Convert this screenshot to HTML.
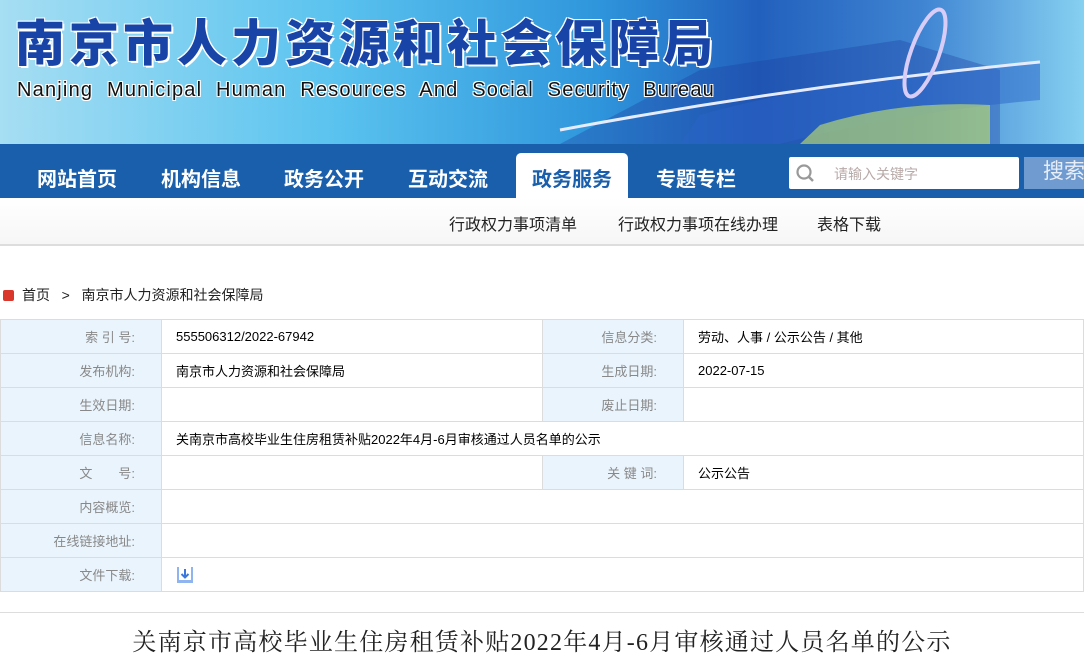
<!DOCTYPE html>
<html><head><meta charset="utf-8"><style>
*{margin:0;padding:0;box-sizing:border-box}
body{width:1084px;height:660px;overflow:hidden;background:#fff;font-family:"Liberation Sans","Noto Sans CJK SC",sans-serif}
.banner{position:absolute;left:0;top:0;width:1084px;height:144px;background:linear-gradient(90deg,#a6def3 0%,#5cc4ef 30%,#2f96dc 55%,#2260bd 70%,#3f84d2 85%,#86d0f1 100%);overflow:hidden}
.t1{position:absolute;left:15px;top:10px;font-family:"Noto Sans CJK SC",sans-serif;font-weight:900;font-size:50px;line-height:60px;color:#1844a8;letter-spacing:4px;text-shadow:2px 2px 0 #fff,-1px -1px 0 #fff,1px -1px 0 #fff,-1px 1px 0 #fff;white-space:nowrap}
.t2{position:absolute;left:17px;top:79px;font-size:20px;color:#111;letter-spacing:1.2px;word-spacing:7px;text-shadow:1px 1px 0 #fff,-1px -1px 0 #fff,1px -1px 0 #fff,-1px 1px 0 #fff;white-space:nowrap}
.nav{position:absolute;top:144px;left:0;width:1084px;height:54px;background:#1a5fab}
.nav a{position:absolute;top:19px;color:#fff;font-weight:bold;font-size:20px;text-decoration:none;white-space:nowrap}
.act{position:absolute;left:516px;top:9px;width:112px;height:45px;background:#fff;border-radius:5px 5px 0 0}
.search{position:absolute;left:789px;top:13px;width:230px;height:32px;background:#fff;border-radius:2px}
.search span{position:absolute;left:45px;top:7px;font-size:14px;color:#b8aaa8}
.btn{position:absolute;left:1024px;top:13px;width:60px;height:32px;background:#6f9bd0;color:#e8eef8;font-size:21px;line-height:30px;padding-left:19px;white-space:nowrap;overflow:hidden}
.sub{position:absolute;top:198px;left:0;width:1084px;height:48px;background:linear-gradient(#fff,#f6f6f6);border-bottom:2px solid #ddd}
.sub span{position:absolute;top:13px;font-size:16px;color:#222;white-space:nowrap}
.bc{position:absolute;top:285px;left:0;font-size:14px;color:#222}
table{position:absolute;top:319px;left:0;width:1084px;border-collapse:collapse;font-size:13px}
td{height:34px;border:1px solid #dcdcdc;padding:0 14px}
td.l{background:#eaf4fc;color:#888;text-align:right;padding-right:26px}
.h{position:absolute;top:622px;left:0;width:1084px;text-align:center;font-family:"Liberation Serif","Noto Serif CJK SC",serif;font-size:24px;letter-spacing:1.2px;color:#222;white-space:nowrap}
</style></head><body>
<div class="banner">
<svg width="1084" height="144" style="position:absolute;left:0;top:0">
<path d="M560 144 L700 70 L900 40 L1000 70 L1000 144Z" fill="#1c3fa0" opacity=".35"/>
<path d="M700 115 Q820 80 1040 62 L1040 100 Q900 112 780 144 L680 144Z" fill="#2a63c8" opacity=".5"/>
<path d="M820 125 Q900 100 990 105 L990 144 L800 144Z" fill="#c7e46a" opacity=".6"/>
<path d="M560 130 Q800 85 1040 62" stroke="#e6ecff" stroke-width="3" fill="none"/>
<ellipse cx="925" cy="53" rx="14" ry="46" transform="rotate(20 925 53)" stroke="#d9cdf7" stroke-width="4" fill="none"/>
</svg>
<div class="t1">南京市人力资源和社会保障局</div>
<div class="t2">Nanjing Municipal Human Resources And Social Security Bureau</div>
</div>
<div class="nav">
<div class="act"></div>
<a style="left:37px">网站首页</a><a style="left:161px">机构信息</a><a style="left:284px">政务公开</a><a style="left:408px">互动交流</a><a style="left:532px;color:#1a5fab">政务服务</a><a style="left:656px">专题专栏</a>
<div class="search"><svg width="24" height="24" style="position:absolute;left:5px;top:5px"><circle cx="10" cy="10" r="6.5" stroke="#999" stroke-width="2.2" fill="none"/><path d="M15 15 L19 19" stroke="#999" stroke-width="2.5"/></svg><span>请输入关键字</span></div>
<div class="btn">搜索</div>
</div>
<div class="sub"><span style="left:449px">行政权力事项清单</span><span style="left:618px">行政权力事项在线办理</span><span style="left:817px">表格下载</span></div>
<div class="bc"><span style="display:inline-block;width:11px;height:11px;background:#d9362c;border-radius:2px;margin:0 8px 0 3px;vertical-align:-1px"></span>首页&nbsp;&nbsp;&nbsp;&gt;&nbsp;&nbsp;&nbsp;南京市人力资源和社会保障局</div>
<table>
<colgroup><col style="width:161px"><col style="width:381px"><col style="width:141px"><col></colgroup>
<tr><td class="l">索 引 号:</td><td>555506312/2022-67942</td><td class="l">信息分类:</td><td>劳动、人事 / 公示公告 / 其他</td></tr>
<tr><td class="l">发布机构:</td><td>南京市人力资源和社会保障局</td><td class="l">生成日期:</td><td>2022-07-15</td></tr>
<tr><td class="l">生效日期:</td><td></td><td class="l">废止日期:</td><td></td></tr>
<tr><td class="l">信息名称:</td><td colspan="3">关南京市高校毕业生住房租赁补贴2022年4月-6月审核通过人员名单的公示</td></tr>
<tr><td class="l">文　　号:</td><td></td><td class="l">关 键 词:</td><td>公示公告</td></tr>
<tr><td class="l">内容概览:</td><td colspan="3"></td></tr>
<tr><td class="l">在线链接地址:</td><td colspan="3"></td></tr>
<tr><td class="l">文件下载:</td><td colspan="3"><svg width="18" height="18" style="vertical-align:middle"><rect x="1" y="1" width="16" height="16" fill="#8fb4ef"/><rect x="3" y="1" width="12" height="13" fill="#fff"/><path d="M9 3 V11 M5.5 8 L9 11.5 L12.5 8" stroke="#3a78e0" stroke-width="2" fill="none"/></svg></td></tr>
</table>
<div style="position:absolute;top:612px;left:0;width:1084px;border-top:1px solid #ddd"></div>
<div class="h">关南京市高校毕业生住房租赁补贴2022年4月-6月审核通过人员名单的公示</div>
</body></html>
